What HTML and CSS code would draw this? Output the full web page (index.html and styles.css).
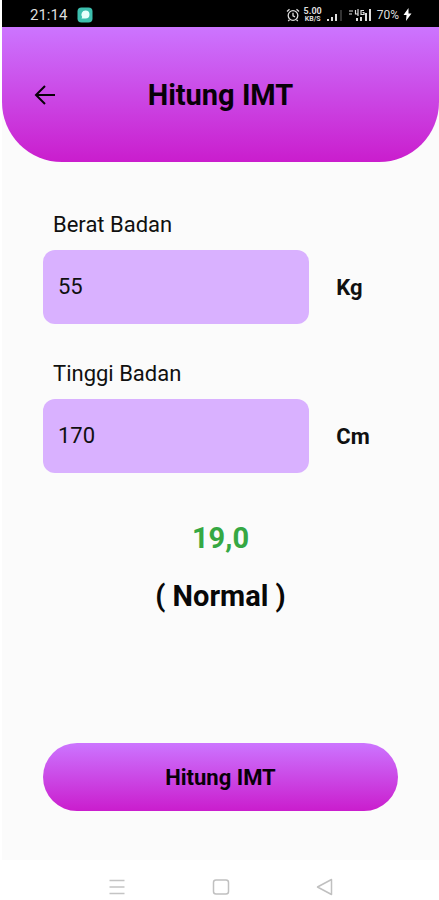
FILE: index.html
```html
<!DOCTYPE html>
<html lang="id">
<head>
<meta charset="utf-8">
<meta name="viewport" content="width=device-width, initial-scale=1">
<title>Hitung IMT</title>
<link rel="stylesheet" href="styles.css">
</head>
<body>
<div class="phone">
  <div class="status">
    <span class="clock">21:14</span>
    <svg class="app" width="16" height="16" viewBox="0 0 16 16"><rect x=".5" y=".5" width="15" height="15" rx="4" fill="#3dbfae"/><path d="M8.500 3.500a4 4 0 0 1 0 8H4.500l.7-1.600A4 4 0 0 1 8.500 3.500z" fill="#e9fffb"/></svg>
    <div class="indicators">
      <svg width="14" height="14" viewBox="0 0 14 14" fill="none" stroke="#ddd" stroke-width="1.300"><circle cx="7" cy="7.500" r="4.800"/><path d="M7 4.800v3l2 1M1 3.500 3.500 1.200M13 3.500l-2.500-2.300M3.500 11.800 2.200 13M10.500 11.800l1.300 1.200"/></svg>
      <span class="speed"><span class="rate">5.00</span><span class="per">KB/S</span></span>
      <svg width="18" height="12" viewBox="0 0 18 12"><path d="M1 10h2v2H1zM5 8h2v4H5zM9 5h2v7H9z" fill="#ddd"/><path d="M14 1h2v11h-2z" fill="#333"/></svg>
      <svg width="25" height="14" viewBox="0 0 25 14"><path d="M1 3h4M1 6h3M7.500 2v4h3M10 1v7M16 2.500h-3v4h3V4.500h-1.500" fill="none" stroke="#ddd" stroke-width="1.200"/><path d="M8 10h2v3H8zM12 9h2v4h-2zM17 5h2v8h-2zM21 1h2v12h-2z" fill="#ddd"/></svg>
      <span class="battery">70%</span>
      <svg width="9" height="13" viewBox="0 0 9 13"><path d="M5.500 0 .5 7h3L3 13l5.500-7.500h-3z" fill="#fff"/></svg>
    </div>
  </div>
  <main class="screen">
    <header class="header">
      <button class="back" type="button" aria-label="Kembali">
        <svg width="22" height="20" viewBox="0 0 22 20" fill="none" stroke="#080008" stroke-width="2"><path d="M21 10H2.500M11 1 2 10l9 9"/></svg>
      </button>
      <h1>Hitung IMT</h1>
    </header>
    <form class="form">
      <div class="field">
        <label for="weight">Berat Badan</label>
        <div class="row"><input id="weight" type="text" inputmode="numeric" value="55"><span class="unit">Kg</span></div>
      </div>
      <div class="field">
        <label for="height">Tinggi Badan</label>
        <div class="row"><input id="height" type="text" inputmode="numeric" value="170"><span class="unit">Cm</span></div>
      </div>
      <div class="result">
        <output class="score" for="weight height">19,0</output>
        <p>( Normal )</p>
      </div>
      <button class="submit" type="button">Hitung IMT</button>
    </form>
  </main>
  <nav class="nav">
    <button type="button" aria-label="Menu"><svg width="18" height="18" viewBox="0 0 18 18" fill="none" stroke="#c4c4c4" stroke-width="1.500"><path d="M1.500 2.500h15M1.500 9h15M1.500 15.500h15"/></svg></button>
    <button type="button" aria-label="Beranda"><svg width="18" height="18" viewBox="0 0 18 18" fill="none" stroke="#c0c0c0" stroke-width="1.500"><rect x="1.500" y="2" width="15" height="14" rx="2.500"/></svg></button>
    <button type="button" aria-label="Kembali"><svg width="18" height="18" viewBox="0 0 18 18" fill="none" stroke="#c0c0c0" stroke-width="1.500" stroke-linejoin="round"><path d="M15.500 1.500v15L1.500 9z"/></svg></button>
  </nav>
</div>
</body>
</html>
```
FILE: styles.css
```css
* {
  box-sizing: border-box;
}

body {
  margin: 0;
  background: #fff;
  color: #101010;
  font-family: Roboto, "Liberation Sans", sans-serif;
}

button {
  border: 0;
  padding: 0;
  background: none;
  color: inherit;
  font: inherit;
  cursor: pointer;
}

svg {
  display: block;
}

.phone {
  display: flex;
  flex-direction: column;
  min-height: 100vh;
  padding-left: 2px;
}

.status {
  display: flex;
  align-items: center;
  gap: 10px;
  height: 27px;
  padding: 2px 27px 0 28px;
  background: #000;
  color: #ddd;
  font-size: 15px;
}

.indicators {
  display: flex;
  align-items: center;
  gap: 4px;
  margin-left: auto;
}

.speed {
  display: flex;
  flex-direction: column;
  align-items: center;
  font-weight: 700;
}

.rate {
  font-size: 9px;
  line-height: 8px;
}

.per {
  font-size: 7px;
  line-height: 8px;
}

.battery {
  font-size: 12px;
}

.screen {
  display: flex;
  flex: 1;
  flex-direction: column;
  background: #fbfbfb;
}

.header {
  display: grid;
  grid-template-columns: 22px 1fr 22px;
  align-items: center;
  height: 135px;
  padding: 0 32px;
  border-radius: 0 0 60px 60px;
  background: linear-gradient(#cc75ff, #ca1dcd);
  color: #080008;
}

h1 {
  margin: 0;
  font-size: 29px;
  font-weight: 700;
  text-align: center;
}

.form {
  display: flex;
  flex: 1;
  flex-direction: column;
  padding: 48px 41px 49px;
}

.field {
  margin-bottom: 35px;
}

label {
  display: block;
  padding-left: 10px;
  font-size: 22px;
  line-height: 30px;
}

.row {
  display: grid;
  grid-template-columns: 3fr 1fr;
  align-items: center;
  margin-top: 10px;
}

input {
  width: 100%;
  height: 74px;
  padding: 0 15px 2px;
  border: 0;
  border-radius: 12px;
  background: #d9b1ff;
  color: #101010;
  font: inherit;
  font-size: 22px;
}

.unit {
  padding-left: 27px;
  font-size: 22px;
  font-weight: 700;
}

.result {
  display: flex;
  flex-direction: column;
  align-items: center;
  gap: 22px;
  margin-top: 12px;
  color: #080808;
  font-size: 29px;
  font-weight: 700;
  line-height: 36px;
}

.result p {
  margin: 0;
}

.score {
  color: #35a843;
}

.submit {
  height: 68px;
  margin-top: auto;
  border-radius: 34px;
  background: linear-gradient(#cc75ff, #ca1dcd);
  color: #080008;
  font-size: 22px;
  font-weight: 700;
}

.nav {
  display: flex;
  align-items: center;
  justify-content: center;
  gap: 86px;
  height: 40px;
  padding-top: 14px;
}
```
